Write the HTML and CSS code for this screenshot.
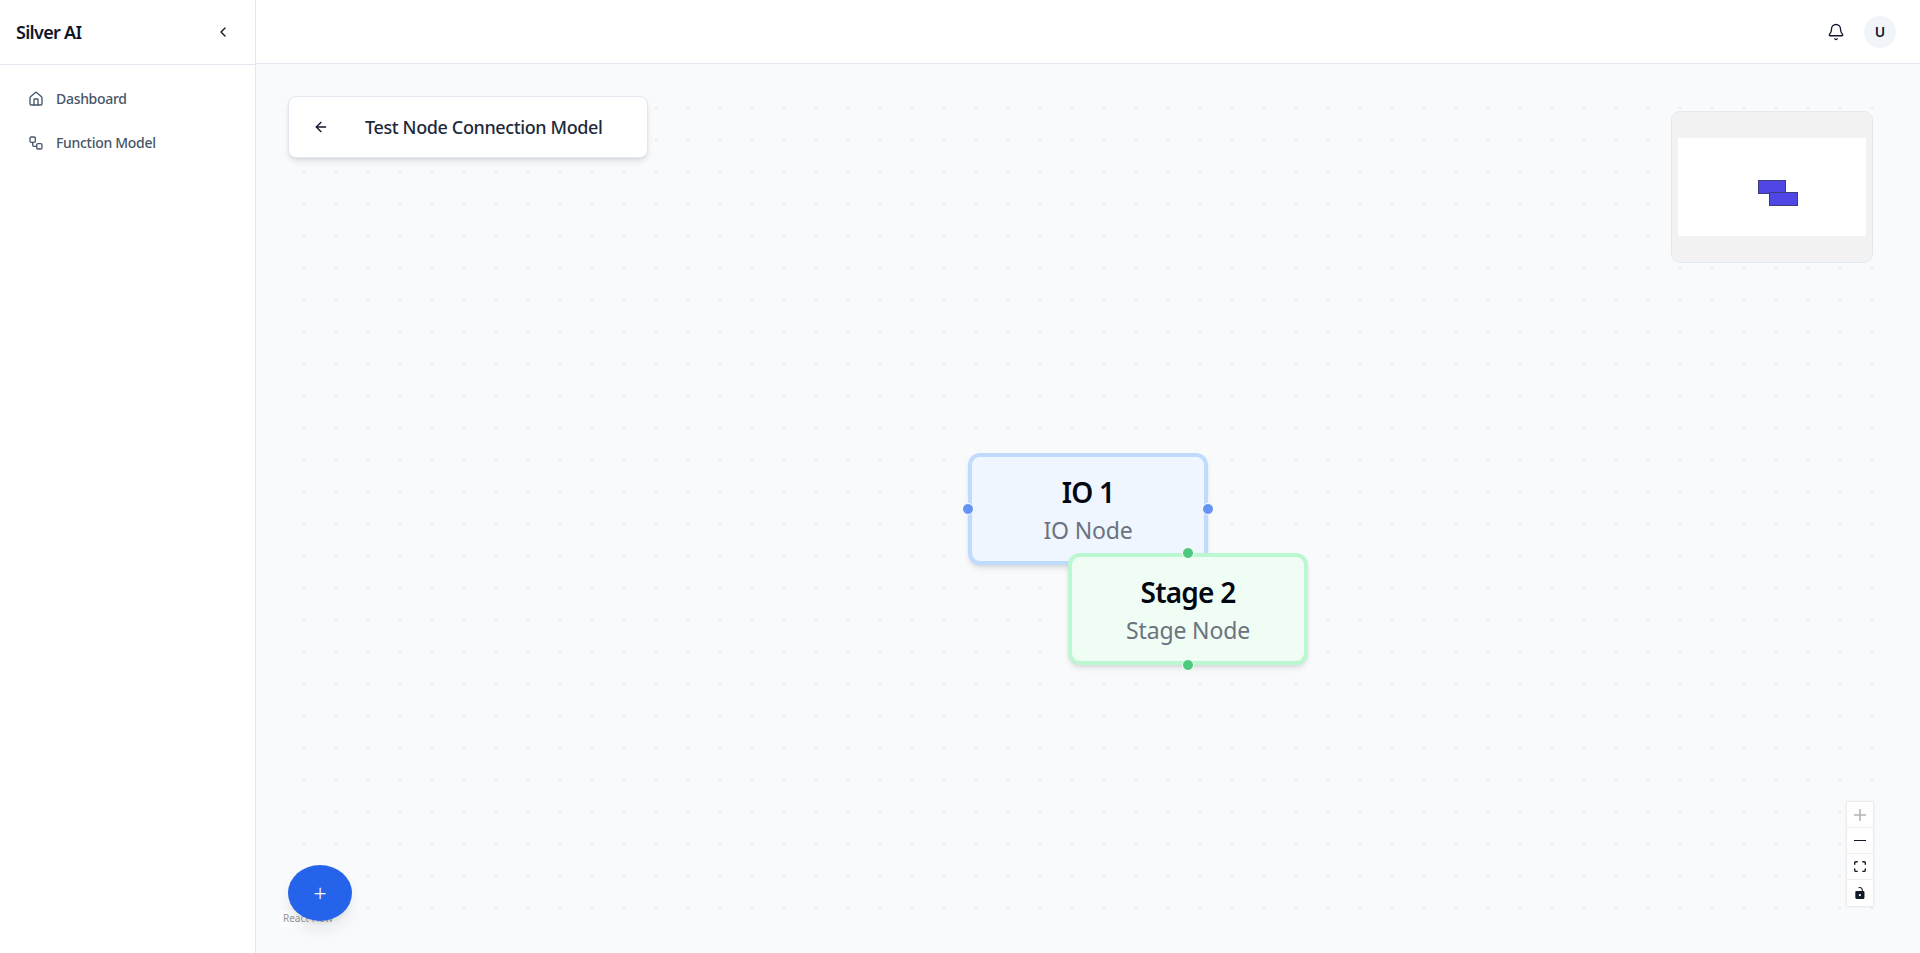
FILE: index.html
```html
<!DOCTYPE html>
<html lang="en">
<head>
<meta charset="UTF-8" />
<title>Silver AI</title>
<link rel="stylesheet" href="styles.css">
</head>
<body>

<aside class="sidebar">
  <div class="brand">
    <span class="brand-name">Silver AI</span>
    <svg class="icon icon-collapse" viewBox="0 0 24 24"><path d="m15 18-6-6 6-6"/></svg>
  </div>
  <nav class="nav">
    <a class="nav-item">
      <svg class="icon" viewBox="0 0 24 24"><path d="M15 21v-8a1 1 0 0 0-1-1h-4a1 1 0 0 0-1 1v8"/><path d="M3 10a2 2 0 0 1 .709-1.528l7-5.999a2 2 0 0 1 2.582 0l7 5.999A2 2 0 0 1 21 10v9a2 2 0 0 1-2 2H5a2 2 0 0 1-2-2z"/></svg>
      <span>Dashboard</span>
    </a>
    <a class="nav-item">
      <svg class="icon" viewBox="0 0 24 24"><rect x="3" y="3" width="8" height="8" rx="2"/><path d="M7 11v4a2 2 0 0 0 2 2h4"/><rect x="13" y="13" width="8" height="8" rx="2"/></svg>
      <span>Function Model</span>
    </a>
  </nav>
</aside>

<div class="main">
  <header class="topbar">
    <svg class="icon icon-bell" viewBox="0 0 24 24"><path d="M10.268 21a2 2 0 0 0 3.464 0"/><path d="M3.262 15.326A1 1 0 0 0 4 17h16a1 1 0 0 0 .74-1.673C19.41 13.956 18 12.499 18 8A6 6 0 0 0 6 8c0 4.499-1.411 5.956-2.738 7.326"/></svg>
    <div class="avatar">U</div>
  </header>

  <section class="canvas">
    <div class="dots"></div>

    <div class="title-panel">
      <svg class="icon icon-back" viewBox="0 0 24 24"><path d="m12 19-7-7 7-7"/><path d="M19 12H5"/></svg>
      <h1>Test Node Connection Model</h1>
    </div>

    <div class="node node-io">
      <span class="handle handle-left"></span>
      <span class="handle handle-right"></span>
      <div class="node-title">IO 1</div>
      <div class="node-type">IO Node</div>
    </div>

    <div class="node node-stage">
      <span class="handle handle-top"></span>
      <span class="handle handle-bottom"></span>
      <div class="node-title">Stage 2</div>
      <div class="node-type">Stage Node</div>
    </div>

    <div class="minimap">
      <svg width="200" height="150" viewBox="0 0 200 150">
        <rect class="mini-mask" x="0" y="0" width="200" height="150"/>
        <rect class="mini-view" x="6" y="26" width="188" height="98"/>
        <rect class="mini-node" x="86.5" y="68.5" width="27" height="13"/>
        <rect class="mini-node" x="97.5" y="80.5" width="28" height="13"/>
      </svg>
    </div>

    <div class="controls">
      <button class="control control-off"><svg viewBox="0 0 32 32"><path d="M32 18.133H18.133V32h-4.266V18.133H0v-4.266h13.867V0h4.266v13.867H32z"/></svg></button>
      <button class="control"><svg viewBox="0 0 32 5"><path d="M0 0h32v4.2H0z"/></svg></button>
      <button class="control"><svg viewBox="0 0 32 30"><path d="M3.692 4.63c0-.53.4-.938.939-.938h5.215V0H4.708C2.13 0 0 2.054 0 4.63v5.216h3.692V4.631zM27.354 0h-5.2v3.692h5.17c.53 0 .984.4.984.939v5.215H32V4.631A4.624 4.624 0 0027.354 0zm.954 24.83c0 .532-.4.94-.939.94h-5.215v3.768h5.215c2.577 0 4.631-2.13 4.631-4.707v-5.139h-3.692v5.139zm-23.677.94c-.531 0-.939-.4-.939-.94v-5.138H0v5.139c0 2.577 2.13 4.707 4.708 4.707h5.138V25.77H4.631z"/></svg></button>
      <button class="control"><svg viewBox="0 0 25 32"><path d="M21.333 10.667H19.81V7.619C19.81 3.429 16.38 0 12.19 0c-1.523 0-3.047.457-4.267 1.334l1.371 2.133c.838-.61 1.828-.915 2.896-.915 2.743 0 4.952 2.21 4.952 5.067v3.048H3.048A3.056 3.056 0 000 13.714v15.238A3.056 3.056 0 003.048 32h18.285a3.056 3.056 0 003.048-3.048V13.714a3.056 3.056 0 00-3.048-3.047zM12.19 24.533a3.056 3.056 0 01-3.047-3.047 3.056 3.056 0 013.047-3.048 3.056 3.056 0 013.048 3.048 3.056 3.056 0 01-3.048 3.047z"/></svg></button>
    </div>

    <div class="attribution">React Flow</div>
    <button class="fab">+</button>
  </section>
</div>

</body>
</html>
```

FILE: styles.css
```css
* { box-sizing: border-box; }
html, body { height: 100%; }
body { margin: 0; display: flex; overflow: hidden; background: #fff; color: #0f172a; font-family: "Noto Sans", "Open Sans", sans-serif; }

.icon { width: 16px; height: 16px; fill: none; stroke: currentColor; stroke-width: 2; stroke-linecap: round; stroke-linejoin: round; flex: none; }

.sidebar { width: 256px; flex: none; border-right: 1px solid #e2e8f0; }
.brand { height: 65px; border-bottom: 1px solid #e2e8f0; display: flex; align-items: center; justify-content: space-between; padding: 0 24px 0 16px; }
.brand-name { font-size: 18px; font-weight: 600; letter-spacing: -.7px; color: #0f172a; margin-top: -1px; }
.nav { padding: 12px; }
.nav-item { height: 44px; display: flex; align-items: center; gap: 12px; padding: 0 16px; font-size: 14px; font-weight: 500; letter-spacing: -.3px; color: #475569; }
.nav-item span { margin-top: -2px; }

.main { flex: 1; display: flex; flex-direction: column; min-width: 0; }
.topbar { height: 64px; flex: none; border-bottom: 1px solid #e2e8f0; display: flex; align-items: center; justify-content: flex-end; gap: 19px; padding: 0 24px; }
.icon-bell { width: 18px; height: 18px; stroke-width: 1.75; }
.avatar { width: 32px; height: 32px; border-radius: 50%; background: #f1f5f9; display: flex; align-items: center; justify-content: center; font-size: 14px; font-weight: 600; }

.canvas { flex: 1; position: relative; background: #f8fafc; }
.dots { position: absolute; top: 32px; right: 32px; bottom: 32px; left: 32px; background-image: radial-gradient(circle, #e8ebf0 1px, transparent 1px); background-size: 32px 32px; background-position: 0 -4px; }

.title-panel { position: absolute; left: 32px; top: 32px; width: 360px; height: 62px; background: #fff; border: 1px solid #e2e8f0; border-radius: 8px; box-shadow: 0 4px 6px -1px rgba(0,0,0,.1), 0 2px 4px -2px rgba(0,0,0,.1); display: flex; align-items: center; padding: 0 24px; gap: 36px; }
.title-panel h1 { margin: -1px 0 0; font-size: 18px; font-weight: 500; letter-spacing: -.38px; color: #1e293b; white-space: nowrap; }

.node { position: absolute; width: 240px; height: 112px; padding-top: 4px; border: 4px solid; border-radius: 12px; box-shadow: 0 4px 6px -1px rgba(0,0,0,.1), 0 2px 4px -2px rgba(0,0,0,.1); display: flex; flex-direction: column; align-items: center; justify-content: center; }
.node-io { left: 712px; top: 389px; background: #eff6ff; border-color: #bfdbfe; }
.node-stage { left: 812px; top: 489px; background: #f0fdf4; border-color: #bbf7d0; }
.node-title { font-size: 28px; font-weight: 600; line-height: 37px; letter-spacing: -.8px; color: #030712; }
.node-type { font-size: 23px; line-height: 38px; letter-spacing: -.15px; color: #6b7280; }

.handle { position: absolute; width: 12px; height: 12px; border-radius: 50%; border: 1px solid #fff; }
.node-io .handle { background: #6495f5; }
.node-stage .handle { background: #4cc97c; }
.handle-left { left: -10px; top: 46px; }
.handle-right { right: -10px; top: 46px; }
.handle-top { left: 110px; top: -10px; }
.handle-bottom { left: 110px; bottom: -10px; }

.minimap { position: absolute; left: 1416px; top: 48px; width: 200px; height: 150px; border-radius: 8px; overflow: hidden; box-shadow: 0 0 0 1px #e2e8f0; }
.minimap svg { display: block; }
.mini-mask { fill: #f2f2f2; }
.mini-view { fill: #fff; }
.mini-node { fill: #4f46e5; stroke: #3b3d7c; stroke-width: 1; }

.controls { position: absolute; left: 1591px; top: 738px; width: 26px; box-shadow: 0 0 2px 1px rgba(0,0,0,.08); }
.control { display: flex; align-items: center; justify-content: center; width: 26px; height: 26px; padding: 5px; background: #fefefe; border: 0; border-bottom: 1px solid #eee; }
.control:last-child { border-bottom: 0; }
.control svg { width: 100%; max-width: 12px; max-height: 12px; fill: #111827; }
.control-off svg { fill: #b3b5ba; }

.attribution { position: absolute; left: 24px; bottom: 26px; padding: 2px 3px; font-size: 10px; line-height: 13px; color: #999; background: rgba(255,255,255,.5); }
.fab { position: absolute; left: 32px; top: 801px; width: 64px; height: 56px; border: 0; border-radius: 50%; background: #2563eb; color: #fff; font-size: 23px; font-weight: 300; line-height: 1; font-family: inherit; box-shadow: 0 10px 15px -3px rgba(0,0,0,.1), 0 4px 6px -4px rgba(0,0,0,.1); }
```
